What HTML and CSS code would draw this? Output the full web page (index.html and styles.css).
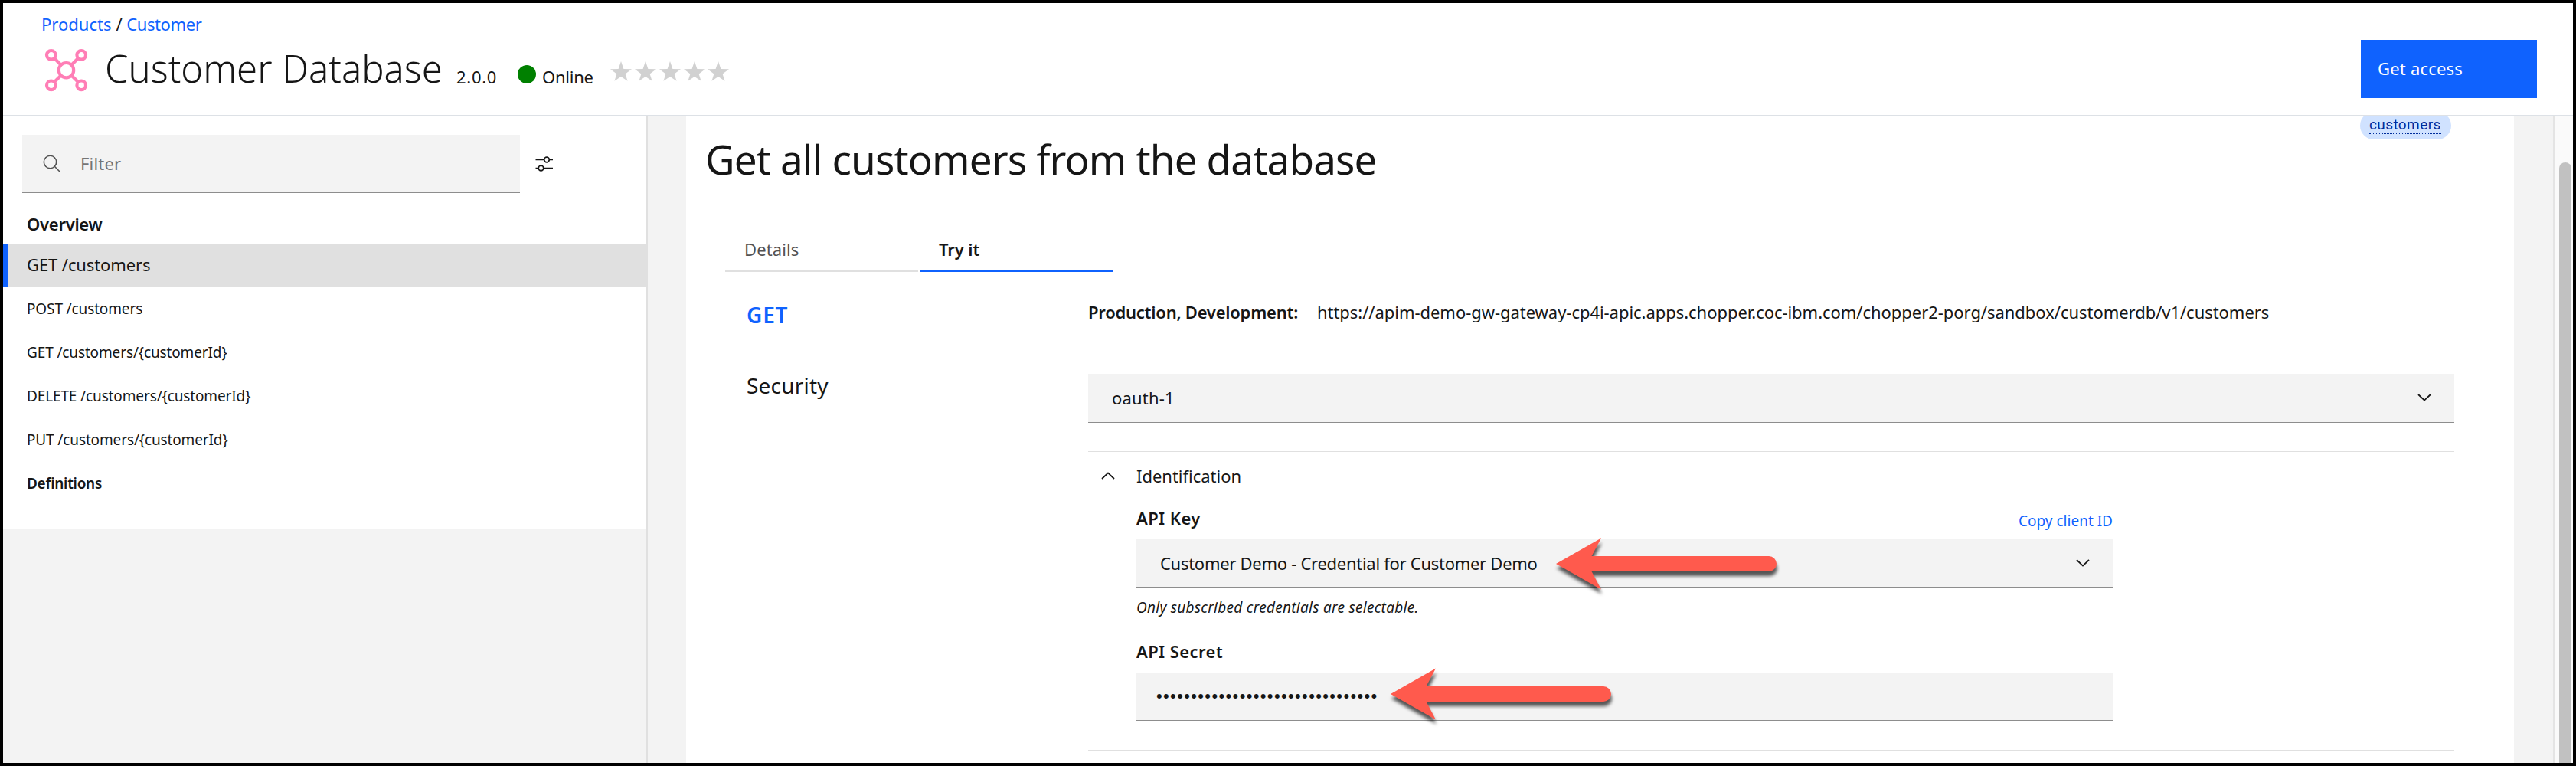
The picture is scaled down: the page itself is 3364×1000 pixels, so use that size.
FILE: index.html
```html
<!DOCTYPE html>
<html lang="en">
<head>
<meta charset="utf-8">
<title>Customer Database</title>
<link rel="stylesheet" href="styles.css">
</head>
<body>
<svg class="defs" aria-hidden="true">
  <symbol id="star" viewBox="0 0 28 26"><path d="M14 0l3.400 9.900L28 10.200l-8.400 6.400 3 9.100L14 20.100l-8.600 5.600 3-9.100L0 10.200l10.600-.3z"/></symbol>
  <symbol id="chevron" viewBox="0 0 18 10"><path d="M1 1l8 7.600L17 1" fill="none" stroke="#161616" stroke-width="1.800"/></symbol>
  <symbol id="arrow" viewBox="0 0 290 68"><path d="M0 34L59 0.500 46.500 24H278a10 10 0 0 1 0 20H46.500L59 67.500z"/></symbol>
</svg>
<header class="header">
  <div class="heading">
    <nav class="breadcrumb"><a class="crumb-products">Products</a><span class="slash">/</span><a>Customer</a></nav>
    <div class="title-row">
      <svg class="logo" viewBox="0 0 58 58" width="58" height="58"><g fill="none" stroke="#ff7eb6" stroke-width="4.200"><circle cx="28.500" cy="28.700" r="9.700"/><circle cx="8.800" cy="8.800" r="5.800"/><circle cx="48.200" cy="8.800" r="5.800"/><circle cx="8.800" cy="48.300" r="5.800"/><circle cx="48.200" cy="48.300" r="5.800"/><path d="M13 13l8.600 8.700M44 13l-8.600 8.700M13 44.100l8.600-8.600M44 44.100l-8.600-8.600"/></g></svg>
      <h1 class="product">Customer Database</h1>
      <span class="version">2.0.0</span>
      <span class="dot"></span>
      <span class="state">Online</span>
      <span class="stars"><svg><use href="#star"/></svg><svg><use href="#star"/></svg><svg><use href="#star"/></svg><svg><use href="#star"/></svg><svg><use href="#star"/></svg></span>
    </div>
  </div>
  <button class="access">Get access</button>
</header>
<div class="content">
  <aside class="sidebar">
    <div class="side-panel">
      <div class="filter-row">
        <div class="filter">
          <svg width="24" height="24" viewBox="0 0 24 24" fill="none" stroke="#525252" stroke-width="1.600"><circle cx="9.500" cy="9.500" r="8.200"/><path d="M15.300 15.300l7.200 7.200"/></svg>
          <span>Filter</span>
        </div>
        <svg class="settings" width="24" height="22" viewBox="0 0 24 22" fill="none" stroke="#161616" stroke-width="1.700"><path d="M.5 5.500h11.200M18.200 5.500h4.800M.5 16.500h3.800M10.800 16.500h12.200"/><circle cx="15" cy="5.500" r="3.300"/><circle cx="7.500" cy="16.500" r="3.300"/></svg>
      </div>
      <ul class="nav">
        <li class="overview">Overview</li>
        <li class="active">GET /customers</li>
        <li>POST /customers</li>
        <li>GET /customers/{customerId}</li>
        <li>DELETE /customers/{customerId}</li>
        <li>PUT /customers/{customerId}</li>
        <li class="definitions">Definitions</li>
      </ul>
    </div>
  </aside>
  <main class="main">
    <section class="panel">
      <div class="tags"><span class="tag"><span>customers</span></span></div>
      <h2 class="operation">Get all customers from the database</h2>
      <div class="tabs"><a class="tab">Details</a><a class="tab current">Try it</a></div>
      <div class="form">
        <div class="method">GET</div>
        <div class="endpoint"><b>Production, Development:</b><span>https://apim-demo-gw-gateway-cp4i-apic.apps.chopper.coc-ibm.com/chopper2-porg/sandbox/customerdb/v1/customers</span></div>
        <div class="section">Security</div>
        <div>
          <div class="select scheme"><span>oauth-1</span><svg><use href="#chevron"/></svg></div>
          <div class="accordion">
            <div class="accordion-head"><svg><use href="#chevron"/></svg><span>Identification</span></div>
            <div class="fields">
              <div class="label-row"><label>API Key</label><a class="copy">Copy client ID</a></div>
              <div class="select key"><span>Customer Demo - Credential for Customer Demo</span><svg><use href="#chevron"/></svg><svg class="arrow arrow-key"><use href="#arrow"/></svg></div>
              <p class="helper">Only subscribed credentials are selectable.</p>
              <label class="secret-label">API Secret</label>
              <div class="select secret"><span>••••••••••••••••••••••••••••••••</span><svg class="arrow arrow-secret"><use href="#arrow"/></svg></div>
            </div>
          </div>
          <div class="rule"></div>
        </div>
      </div>
    </section>
  </main>
  <div class="scrollbar"><div class="thumb"></div></div>
</div>
</body>
</html>
```
FILE: styles.css
```css
* { box-sizing: border-box; }

body {
  margin: 0;
  height: 1000px;
  border: 4px solid #000;
  display: flex;
  flex-direction: column;
  overflow: hidden;
  background: #fff;
  color: #161616;
  font: 22px/30px "Noto Sans", "Open Sans", sans-serif;
  white-space: nowrap;
}

h1, h2, p, ul { margin: 0; padding: 0; list-style: none; }
svg { display: block; flex: none; }
.defs { width: 0; height: 0; }

.header {
  flex: none;
  height: 147px;
  border-bottom: 1px solid #dde1e6;
  padding: 12px 47px 0 50px;
  display: flex;
  justify-content: space-between;
}
.breadcrumb { display: flex; letter-spacing: -0.400px; color: #0f62fe; }
.crumb-products { letter-spacing: 0; }
.slash { color: #161616; margin: 0 6px; }
.title-row { display: flex; align-items: flex-start; margin-top: 17px; }
.logo { margin-left: 4px; }
.product { margin-left: 21px; width: 459px; font-size: 49px; font-weight: 300; line-height: 53px; }
.version { margin-top: 22px; width: 80px; letter-spacing: 0.700px; }
.version, .state { height: 30px; }
.dot { width: 24px; height: 24px; margin-top: 22px; margin-right: 8px; border-radius: 50%; background: #008000; }
.state { margin-top: 22px; width: 89px; letter-spacing: -0.250px; }
.stars { display: flex; gap: 3.850px; margin-top: 17px; fill: #d1d1d1; }
.stars svg { width: 28px; height: 26px; }
.access {
  width: 230px;
  height: 76px;
  margin-top: 36px;
  padding: 0 0 2px 22px;
  border: 0;
  background: #0f62fe;
  color: #fff;
  font: inherit;
  letter-spacing: 0.200px;
  text-align: left;
}

.content { flex: 1; min-height: 0; display: flex; }

.sidebar { width: 842px; border-right: 3px solid #e0e0e0; background: #f3f3f3; }
.side-panel { height: 540px; padding-top: 25px; background: #fff; }
.filter-row { display: flex; align-items: center; padding-left: 25px; }
.filter {
  width: 650px;
  height: 76px;
  padding-left: 27px;
  display: flex;
  align-items: center;
  gap: 25px;
  border-bottom: 1px solid #8d8d8d;
  background: #f3f3f3;
  color: #757575;
  letter-spacing: 0.200px;
}
.filter span { padding-bottom: 2px; }
.settings { margin-left: 20px; }
.nav { margin-top: 17px; }
.nav li { height: 57px; line-height: 57px; padding-left: 31px; font-size: 19px; letter-spacing: -0.130px; }
.nav .overview { height: 49px; line-height: 47px; padding-left: 31px; font-size: 22px; font-weight: 600; letter-spacing: -0.280px; }
.nav .active { padding-left: 25px; border-left: 6px solid #0f62fe; background: #e0e0e0; line-height: 55px; font-size: 22px; letter-spacing: -0.100px; }
.nav .definitions { font-weight: 600; letter-spacing: -0.300px; }

.main { flex: 1; padding: 0 51px 0 50px; border-right: 2px solid #e4e4e4; background: #f3f3f3; overflow: hidden; }
.panel { height: 845px; background: #fff; }
.tags { display: flex; justify-content: flex-end; height: 31px; padding-right: 82px; align-items: flex-end; overflow: hidden; }
.tag { flex: none; width: 119px; height: 36px; padding: 7px 13px 0 12px; border-radius: 18px; background: #d0e2ff; color: #002d9c; font: 19px/20px Roboto, sans-serif; letter-spacing: 0.400px; }
.tag span { display: block; height: 22px; border-bottom: 1px dotted #002d9c; }
.operation { margin: -9px 0 0 25px; font-size: 53px; line-height: 70px; font-weight: 400; letter-spacing: -0.850px; }
.tabs { display: flex; gap: 2px; margin: 64px 0 0 51px; }
.tab { width: 252px; height: 48px; padding: 3px 0 0 25px; border-bottom: 3px solid #e0e0e0; color: #525252; letter-spacing: 0.100px; }
.tab.current { padding-left: 25px; border-color: #0f62fe; color: #161616; font-weight: 600; letter-spacing: -0.100px; }

.form { display: grid; grid-template-columns: 446px 1784px; grid-template-rows: 96px auto; margin: 37px 0 0 79px; }
.method { color: #0f62fe; font-size: 28px; line-height: 39px; font-weight: 600; letter-spacing: 0.800px; }
.section { font-size: 28px; line-height: 31px; letter-spacing: 0.200px; }
.endpoint { display: flex; letter-spacing: -0.040px; }
.endpoint b { width: 299px; font-weight: 600; letter-spacing: -0.240px; }
.select {
  position: relative;
  height: 63px;
  padding: 0 30px 0 31px;
  display: flex;
  align-items: center;
  justify-content: space-between;
  border-bottom: 1px solid #8d8d8d;
  background: #f3f3f3;
  letter-spacing: -0.280px;
}
.select > svg, .accordion-head svg { width: 18px; height: 10px; }
.select.scheme { height: 64px; padding-bottom: 1px; letter-spacing: 0.200px; }
.accordion { margin-top: 37px; border-top: 1px solid #e0e0e0; }
.accordion-head { display: flex; align-items: center; gap: 28px; margin-top: 16px; padding-left: 17px; letter-spacing: -0.020px; }
.accordion-head svg { transform: rotate(180deg); }
.fields { width: 1275px; margin-left: 63px; }
.label-row { display: flex; justify-content: space-between; padding-top: 25px; height: 68px; }
label { display: block; font-weight: 600; letter-spacing: 0.400px; }
.copy { margin-top: 4px; color: #0f62fe; font-size: 19px; }
.helper { margin-top: 11px; font-size: 19px; font-style: italic; letter-spacing: 0.280px; }
.secret-label { margin-top: 27px; }
.select.secret { margin-top: 13px; padding-left: 26px; padding-bottom: 0; }
.secret span { font-family: "Liberation Sans", Arial, sans-serif; letter-spacing: 1.350px; }
.rule { margin-top: 38px; height: 1px; background: #e0e0e0; }

.select > .arrow { position: absolute; width: 290px; height: 68px; fill: #ff5a4d; overflow: visible; filter: drop-shadow(1px 6px 2px rgba(0, 0, 0, 0.65)); }
.arrow-key { left: 548px; top: -2px; }
.arrow-secret { left: 332px; top: -6px; }

.scrollbar { width: 24px; padding: 61px 2px 0 6px; background: #fafafa; }
.thumb { height: 800px; border-radius: 8px 8px 0 0; background: #c1c1c1; }
```
